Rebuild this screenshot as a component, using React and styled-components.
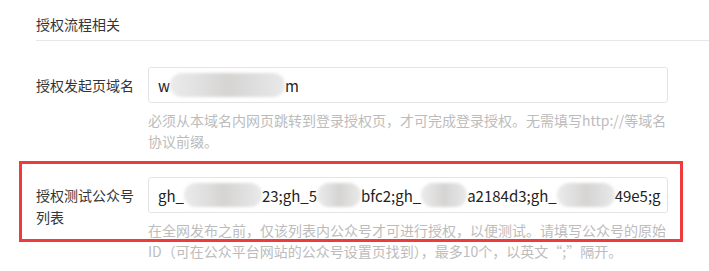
import React from "react";
import styled, { createGlobalStyle } from "styled-components";

const GlobalStyle = createGlobalStyle`
  body {
    margin: 0;
    background: #fff;
    font-family: "Microsoft YaHei", "Noto Sans CJK SC", "Noto Sans", sans-serif;
    color: #353535;
  }
`;

const Page = styled.div`
  padding: 13px 0 0 36px;
  width: 673px;
`;

const SectionTitle = styled.div`
  font-size: 14px;
  line-height: 22px;
  padding-bottom: 5px;
  border-bottom: 1px solid #e7e7eb;
`;

const Form = styled.div`
  margin-top: 26px;
  display: flex;
  flex-direction: column;
  gap: 25px;
`;

const Row = styled.div`
  position: relative;
  display: flex;
  align-items: flex-start;
`;

const Label = styled.div`
  width: 100px;
  margin-right: 12px;
  padding-top: 7px;
  font-size: 14px;
  line-height: 22px;
  color: #353535;
`;

const Control = styled.div`
  width: 520px;
`;

const Field = styled.div`
  box-sizing: border-box;
  height: 36px;
  border: 1px solid #e4e4e8;
  border-radius: 3px;
  padding: 0 13px 0 9px;
  display: flex;
  align-items: center;
  overflow: hidden;
  white-space: nowrap;
  font-size: 15px;
  color: #222;
`;

const Blur = styled.span`
  display: inline-block;
  flex: none;
  height: 24px;
  border-radius: 12px;
  background: linear-gradient(90deg, #ebebeb, #dedede 30%, #d6d4d2 50%, #dcdcdc 70%, #e9e9e9);
  filter: blur(1.5px);
`;

const Hint = styled.div`
  margin-top: 7px;
  font-size: 14px;
  line-height: 21px;
  color: #bcbcbc;
`;

const Highlight = styled.div`
  position: absolute;
  top: -16px;
  left: -17px;
  right: 26px;
  bottom: 20px;
  border: 3px solid #ef3b3b;
  pointer-events: none;
`;

export default function App() {
  return (
    <>
      <GlobalStyle />
      <Page>
        <SectionTitle>授权流程相关</SectionTitle>
        <Form>
          <Row>
            <Label>授权发起页域名</Label>
            <Control>
              <Field>
                w<Blur style={{ width: 115 }} />m
              </Field>
              <Hint>
                必须从本域名内网页跳转到登录授权页，才可完成登录授权。无需填写http://等域名
                <br />
                协议前缀。
              </Hint>
            </Control>
          </Row>
          <Row>
            <Label>授权测试公众号列表</Label>
            <Control>
              <Field>
                gh_<Blur style={{ width: 78 }} />23;gh_5<Blur style={{ width: 44 }} />bfc2;gh_
                <Blur style={{ width: 46 }} />a2184d3;gh_<Blur style={{ width: 58 }} />49e5;g
              </Field>
              <Hint>
                在全网发布之前，仅该列表内公众号才可进行授权，以便测试。请填写公众号的原始
                <br />
                ID（可在公众平台网站的公众号设置页找到），最多10个，以英文“;”隔开。
              </Hint>
            </Control>
            <Highlight />
          </Row>
        </Form>
      </Page>
    </>
  );
}
